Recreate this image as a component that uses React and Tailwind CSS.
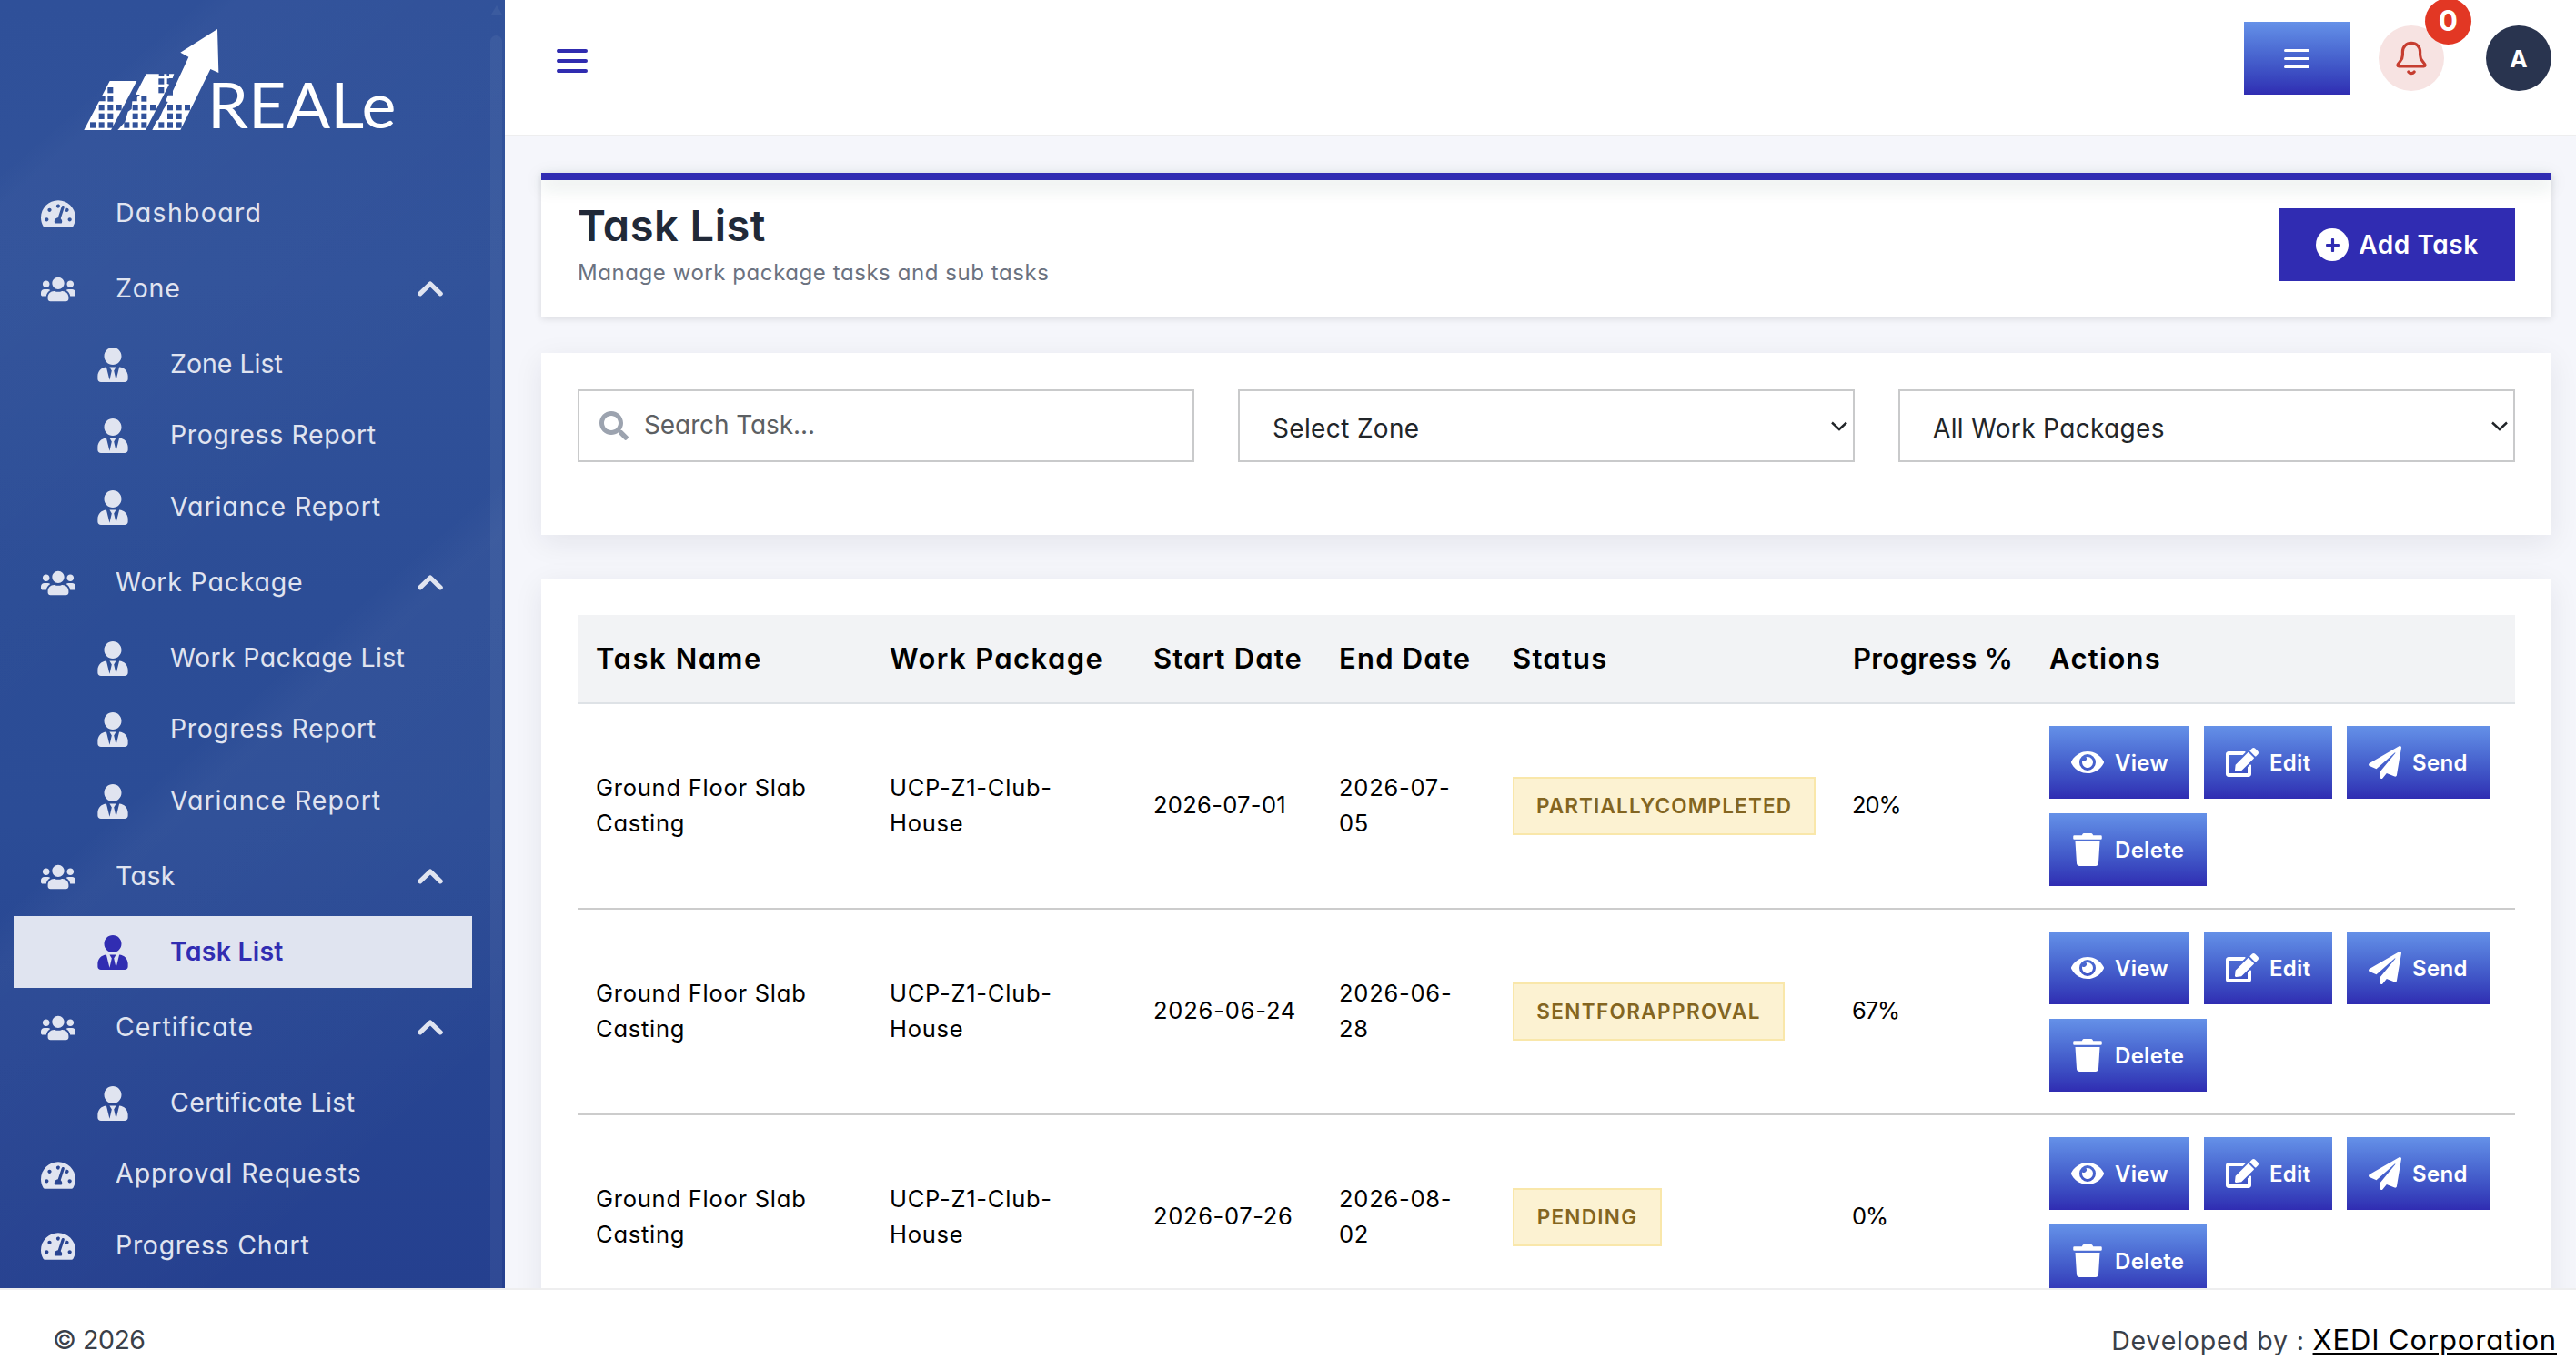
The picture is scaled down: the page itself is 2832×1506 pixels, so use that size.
import React from "react";
import {
  FaEdit,
  FaEye,
  FaPaperPlane,
  FaPlus,
  FaSearch,
  FaTachometerAlt,
  FaTrash,
  FaUsers,
  FaUserTie,
} from "react-icons/fa";

const menu = [
  { label: "Dashboard", type: "link", text: "tracking-[1.3px]" },
  { label: "Zone", type: "group", text: "tracking-[0.8px]" },
  { label: "Zone List", type: "child", text: "tracking-[0px]" },
  { label: "Progress Report", type: "child", text: "tracking-[0.6px]" },
  { label: "Variance Report", type: "child", text: "tracking-[0.9px]" },
  { label: "Work Package", type: "group", text: "tracking-[0.8px]" },
  { label: "Work Package List", type: "child", text: "tracking-[0.35px]" },
  { label: "Progress Report", type: "child", text: "tracking-[0.6px]" },
  { label: "Variance Report", type: "child", text: "tracking-[0.9px]" },
  { label: "Task", type: "group", text: "tracking-[0.4px]" },
  { label: "Task List", type: "child", active: true, text: "tracking-[0.2px]" },
  { label: "Certificate", type: "group", text: "tracking-[0.95px]" },
  { label: "Certificate List", type: "child", text: "tracking-[0.4px]" },
  { label: "Approval Requests", type: "link", text: "tracking-[1px]" },
  { label: "Progress Chart", type: "link", text: "tracking-[0.7px]" },
];

const tasks = [
  {
    name: "Ground Floor Slab\nCasting",
    workPackage: "UCP-Z1-Club-\nHouse",
    start: "2026-07-01",
    startText: "tracking-[0.3px]",
    end: "2026-07-\n05",
    status: "PARTIALLYCOMPLETED",
    badge: "w-[333px] tracking-[1.15px]",
    progress: "20%",
  },
  {
    name: "Ground Floor Slab\nCasting",
    workPackage: "UCP-Z1-Club-\nHouse",
    start: "2026-06-24",
    startText: "tracking-[0.8px]",
    end: "2026-06-\n28",
    status: "SENTFORAPPROVAL",
    badge: "w-[299px] tracking-[1.4px]",
    progress: "67%",
  },
  {
    name: "Ground Floor Slab\nCasting",
    workPackage: "UCP-Z1-Club-\nHouse",
    start: "2026-07-26",
    startText: "tracking-[0.65px]",
    end: "2026-08-\n02",
    status: "PENDING",
    badge: "w-[164px] tracking-[1.3px]",
    progress: "0%",
  },
];

const windows = [
  [103, 216], [103, 244], [74, 273], [103, 273], [131, 273], [74, 302], [103, 302],
  [45, 331], [74, 331], [103, 331],
  [271, 187], [271, 216], [214, 244], [185, 273], [214, 273], [243, 273],
  [185, 302], [214, 302], [157, 331], [185, 331], [214, 331],
  [300, 273], [329, 273], [357, 273], [300, 302], [329, 302],
  [271, 331], [300, 331], [329, 331],
];

const Logo = () => (
  <svg width="356" height="150" viewBox="0 0 1068 450" className="shrink-0">
    <g fill="#fff">
      <polygon points="110,195 199,195 114,357 25,357" />
      <polygon points="230,172 272,172 322,172 317,186 306,186 299,204 306,206 228,357 136,357 160,330 170,296 182,288 184,262 210,240 195,240" />
      <polygon points="250,357 343,357 442,156 469,168 465,24 343,101 370,116 318,228 318,242 302,242 294,262 302,264 286,290 272,322 264,328" />
    </g>
    <g fill="#30519a">
      {windows.map(([x, y]) => (
        <rect key={`${x}-${y}`} x={x} y={y} width="18" height="19" />
      ))}
      <rect x="299" y="187" width="9" height="17" />
      <rect x="298" y="171" width="8" height="7" />
      <rect x="272" y="171" width="17" height="8" />
      <polygon points="184,244 200,244 200,262 180,262" />
      <polygon points="80,244 95,244 95,262 72,262" />
    </g>
    <text
      x="432"
      y="351"
      textLength="622"
      lengthAdjust="spacingAndGlyphs"
      fill="#fff"
      className="font-['Lato'] text-[210px]"
    >
      REALe
    </text>
  </svg>
);

const Chevron = () => (
  <svg width="28" height="17" viewBox="0 0 28 17" fill="none">
    <path
      d="M2.8 13.8 14 3l11.2 10.8"
      stroke="#e0e4f0"
      strokeWidth="5.2"
      strokeLinecap="round"
      strokeLinejoin="round"
    />
  </svg>
);

const MenuItem = ({ item }) => {
  if (item.type === "child") {
    return (
      <div
        className={
          item.active
            ? "mx-[15px] w-[504px] h-[78.5px] flex items-center pl-[92px] bg-[#e0e4f0] text-[#312db2] font-semibold"
            : "mx-[15px] w-[504px] h-[78.5px] flex items-center pl-[92px]"
        }
      >
        <FaUserTie className="w-[34px] h-[38px] mt-[1px]" />
        <span className={`ml-[46px] ${item.text}`}>{item.label}</span>
      </div>
    );
  }

  return (
    <div
      className={
        item.type === "group"
          ? "h-[87.5px] flex items-center pl-[45px] pr-[68px]"
          : "h-[78.5px] flex items-center pl-[45px] pr-[68px]"
      }
    >
      {item.type === "group" ? (
        <FaUsers className="w-[38px] h-[38px] mt-[2px]" />
      ) : (
        <FaTachometerAlt className="w-[38px] h-[38px] mt-[2px]" />
      )}
      <span className={`ml-[44px] flex-1 ${item.text}`}>{item.label}</span>
      {item.type === "group" && <Chevron />}
    </div>
  );
};

const Sidebar = () => (
  <aside className="relative w-[555px] shrink-0 overflow-hidden bg-[linear-gradient(139deg,transparent_0%,transparent_10%,rgba(255,255,255,0.02)_12%,transparent_45%,transparent_53%,rgba(255,255,255,0.03)_56%,rgba(255,255,255,0.01)_80%,transparent_86%),linear-gradient(180deg,#2f5099_0%,#31529a_22%,#2c4d96_46%,#2b4c96_64%,#274592_82%,#25408f_100%)] text-[28.5px] text-[#e0e4f0]">
    <div className="pl-[84px] pt-6 flex">
      <Logo />
    </div>
    <nav className="mt-[21px]">
      {menu.map((item, index) => (
        <MenuItem key={index} item={item} />
      ))}
    </nav>

    {/* scrollbar */}
    <div className="absolute right-[3px] top-0 w-[13px] h-full flex flex-col items-center">
      <div className="mt-[6px] w-0 h-0 border-x-[6px] border-x-transparent border-b-[10px] border-b-white/5" />
      <div className="mt-[23px] w-full flex-1 rounded-t-full bg-white/5" />
    </div>
  </aside>
);

const TopBar = () => (
  <header className="h-[150px] shrink-0 bg-white border-b-2 border-[#eeeeef] flex items-start justify-between pl-[57px] pr-[27px]">
    <div className="mt-[54px] w-[34px] flex flex-col gap-[7px]">
      <span className="h-1 rounded-full bg-[#302cb0]" />
      <span className="h-1 rounded-full bg-[#302cb0]" />
      <span className="h-1 rounded-full bg-[#302cb0]" />
    </div>

    <div className="flex items-center">
      <button className="mt-6 w-[116px] h-20 flex flex-col items-center justify-center gap-[6px] bg-linear-to-b from-[#6591e8] to-[#302cb2]">
        <span className="w-7 h-[3px] rounded-full bg-white" />
        <span className="w-7 h-[3px] rounded-full bg-white" />
        <span className="w-7 h-[3px] rounded-full bg-white" />
      </button>

      <div className="relative mt-6 ml-8 size-[72px] rounded-full bg-[#f7e3e2] flex items-center justify-center">
        <svg
          width="34"
          height="38"
          viewBox="0 0 34 38"
          fill="none"
          stroke="#c63d30"
          strokeWidth="3.2"
          strokeLinecap="round"
          strokeLinejoin="round"
        >
          <path d="M17 2.4c-5.600 0-9.600 4.200-9.600 9.600v3.500c0 3-1 5-3 7.300C2.800 24.600 1.700 26 1.900 27c.1.600.6.800 1.300.8h27.600c.7 0 1.200-.2 1.300-.8.200-1-.9-2.400-2.500-4.200-2-2.300-3-4.300-3-7.300V12c0-5.400-4-9.600-9.600-9.600z" />
          <path d="M13.800 33.900c1.700 2.200 4.700 2.200 6.400 0" />
        </svg>
        <span className="absolute -top-[30px] left-[51px] size-[51px] rounded-full bg-[#e23724] text-white text-[31px] font-bold flex items-center justify-center">
          0
        </span>
      </div>

      <div className="mt-6 ml-[46px] size-[72px] rounded-full bg-[#29344f] text-white text-[26px] font-bold flex items-center justify-center">
        A
      </div>
    </div>
  </header>
);

const ActionButton = ({ icon, label, className }) => (
  <button
    className={`h-20 pl-6 flex items-center gap-3 bg-linear-to-b from-[#6591e8] to-[#302cb2] text-white text-[24px] tracking-[0.3px] font-semibold whitespace-nowrap ${className}`}
  >
    {icon}
    {label}
  </button>
);

const SelectBox = ({ label }) => (
  <div className="w-[678px] h-20 border-2 border-[#c9cacb] pl-[36px] pr-[6px] flex items-center justify-between">
    <span className="mt-[5px] h-[34px] leading-[34px] overflow-hidden text-[28px] text-[#212529] tracking-[0.35px]">
      {label}
    </span>
    <svg width="18" height="11" viewBox="0 0 18 11" fill="none">
      <path d="m1 1.500 8 7.500 8-7.500" stroke="#212529" strokeWidth="2.400" />
    </svg>
  </div>
);

const columns = [
  { title: "Task Name", className: "w-[323px] pl-5 tracking-[1.55px]" },
  { title: "Work Package", className: "w-[290px] pl-5 tracking-[1.4px]" },
  { title: "Start Date", className: "w-[204px] pl-5 tracking-[1.15px]" },
  { title: "End Date", className: "w-[191px] pl-5 tracking-[1.2px]" },
  { title: "Status", className: "w-[374px] pl-5 tracking-[1.25px]" },
  { title: "Progress %", className: "w-[215px] pl-5 tracking-[0.35px]" },
  { title: "Actions", className: "w-[533px] pl-[21px] tracking-[1.3px]" },
];

const cell = "pl-5 pb-[2px] border-b-2 border-[#cccccc] tracking-[0.75px]";

const TaskTable = () => (
  <table className="w-[2130px] table-fixed border-separate border-spacing-0 text-left text-black">
    <thead>
      <tr className="h-[98px] bg-[#f2f3f5] text-[31px] whitespace-nowrap">
        {columns.map((column) => (
          <th
            key={column.title}
            className={`border-b-2 border-[#dee2e6] font-semibold ${column.className}`}
          >
            {column.title}
          </th>
        ))}
      </tr>
    </thead>
    <tbody>
      {tasks.map((task, index) => (
        <tr key={index} className="h-[226px] text-[25.5px] leading-[39px] whitespace-pre-line">
          <td className={cell}>{task.name}</td>
          <td className={cell}>{task.workPackage}</td>
          <td className="pl-5 pb-[3px] border-b-2 border-[#cccccc]">
            <span className={task.startText}>{task.start}</span>
          </td>
          <td className={cell}>{task.end}</td>
          <td className="pl-5 border-b-2 border-[#cccccc]">
            <span
              className={`h-16 pb-[2px] flex items-center justify-center border-2 border-[#f9e7aa] bg-[#fcf2d2] text-[#836521] text-[22.500px] font-semibold ${task.badge}`}
            >
              {task.status}
            </span>
          </td>
          <td className="pl-[19px] pb-[3px] border-b-2 border-[#cccccc] tracking-[-1.1px]">
            {task.progress}
          </td>
          <td className="pl-[21px] border-b-2 border-[#cccccc]">
            <div className="flex flex-wrap gap-4">
              <ActionButton className="w-[154px]" icon={<FaEye className="size-9 shrink-0" />} label="View" />
              <ActionButton className="w-[141px]" icon={<FaEdit className="size-9 shrink-0" />} label="Edit" />
              <ActionButton className="w-[158px]" icon={<FaPaperPlane className="size-9 shrink-0" />} label="Send" />
              <ActionButton className="w-[173px]" icon={<FaTrash className="size-9 shrink-0" />} label="Delete" />
            </div>
          </td>
        </tr>
      ))}
    </tbody>
  </table>
);

const App = () => {
  return (
    <div className="w-[2832px] h-[1506px] flex flex-col overflow-hidden bg-white font-['Inter','Open_Sans',sans-serif] [font-feature-settings:'cv11']">
      <div className="h-[1416px] shrink-0 flex overflow-hidden">
        <Sidebar />

        <div className="flex-1 flex flex-col bg-[#f5f6fb]">
          <TopBar />

          <main className="flex-1 min-h-0 overflow-hidden pl-10 pr-[27px] pt-10">
            <section className="h-[158px] bg-white shadow-[0_2px_8px_rgba(0,0,0,0.12)]">
              <div className="h-2 bg-[#302cb2] shadow-[0_6px_20px_rgba(20,70,60,0.18)]" />
              <div className="h-[150px] flex items-start justify-between pl-10 pr-10">
                <div>
                  <h1 className="mt-[21px] leading-[58px] text-[47px] tracking-[0.5px] font-semibold text-[#202938]">
                    Task List
                  </h1>
                  <p className="mt-[5px] leading-[36px] text-[24px] tracking-[0.56px] text-[#6b7280]">
                    Manage work package tasks and sub tasks
                  </p>
                </div>
                <button className="mt-[31px] w-[259px] h-20 flex items-center justify-center gap-[11px] bg-[#302cb2] text-white text-[28px] tracking-[0.55px] font-semibold">
                  <span className="size-9 rounded-full bg-white flex items-center justify-center">
                    <FaPlus className="size-[17px] text-[#302cb2]" />
                  </span>
                  Add Task
                </button>
              </div>
            </section>

            <section className="mt-10 h-[200px] bg-white px-10 pt-10 flex items-start gap-12 shadow-[0_8px_30px_rgba(20,20,50,0.08)]">
              <div className="w-[678px] h-20 border-2 border-[#c9cacb] px-[22px] flex items-center">
                <FaSearch className="size-8 text-[#9ca3af]" />
                <span className="ml-[17px] -mt-[2px] text-[28px] tracking-[-0.1px] text-[#5c5f63]">
                  Search Task...
                </span>
              </div>
              <SelectBox label="Select Zone" />
              <SelectBox label="All Work Packages" />
            </section>

            <section className="mt-12 h-[900px] bg-white p-10 shadow-[0_8px_30px_rgba(20,20,50,0.08)]">
              <TaskTable />
            </section>
          </main>
        </div>
      </div>

      <footer className="h-[90px] shrink-0 bg-white border-t-2 border-[#eeeeef] flex items-center justify-between pl-[58px] pr-[21px] pt-[23px] text-[28.5px] text-[#3a4049]">
        <span className="tracking-[-0.5px]">© 2026</span>
        <span className="tracking-[0.8px]">
          Developed by :{" "}
          <a className="text-[31px] text-black underline decoration-[2.5px] underline-offset-[3px] tracking-[0.85px]">
            XEDI Corporation
          </a>
        </span>
      </footer>
    </div>
  );
};

export default App;
